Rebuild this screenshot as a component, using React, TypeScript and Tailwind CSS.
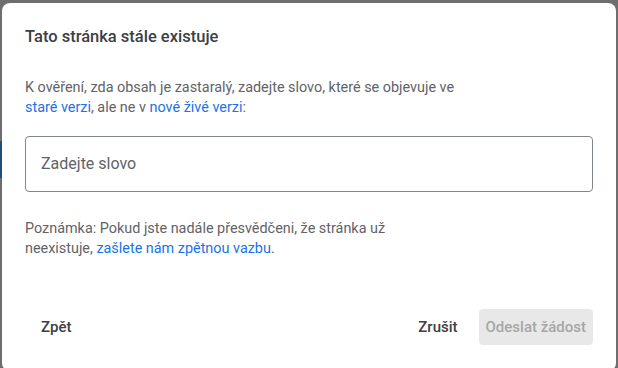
export default function App() {
  return (
    <div
      className="relative w-[618px] h-[368px] overflow-hidden bg-[#6e6e6e]"
      style={{ fontFamily: 'Roboto, "Noto Sans", sans-serif' }}
    >
      {/* page content peeking behind the dialog */}
      <div className="absolute left-0 top-[141px] w-[2px] h-[37px] bg-[#1f4e7a]" />

      <div className="ml-[2px] mt-[3px] w-[614px] h-[368px] rounded-lg bg-white px-[23px] pt-[22px] flex flex-col">
        <h2 className="text-[16.5px] leading-6 font-medium text-[#3c4043]">Tato stránka stále existuje</h2>

        <p className="mt-[29px] text-[14.4px] leading-5 text-[#5f6368]">
          K ověření, zda obsah je zastaralý, zadejte slovo, které se objevuje ve
          <br />
          <a className="text-[#1a73e8]">staré verzi</a>, ale ne v <a className="text-[#1a73e8]">nové živé verzi</a>:
        </p>

        <div className="mt-[18px] h-[56px] rounded border border-[#80868b] flex items-center px-[15px]">
          <span className="text-[16px] text-[#5f6368]">Zadejte slovo</span>
        </div>

        <p className="mt-[27px] text-[14.4px] leading-5 text-[#5f6368]">
          Poznámka: Pokud jste nadále přesvědčeni, že stránka už
          <br />
          neexistuje, <a className="text-[#1a73e8]">zašlete nám zpětnou vazbu</a>.
        </p>

        <div className="mt-[50px] flex items-center justify-between">
          <button className="h-9 px-4 rounded text-[15px] font-medium text-[#3c4043]">Zpět</button>
          <div className="flex items-center gap-[5px]">
            <button className="h-9 px-4 rounded text-[15px] font-medium text-[#3c4043]">Zrušit</button>
            <button className="h-9 px-[7px] rounded bg-[#e8e8e8] text-[15px] font-medium text-[#a6a6a6]">
              Odeslat žádost
            </button>
          </div>
        </div>
      </div>
    </div>
  );
}
